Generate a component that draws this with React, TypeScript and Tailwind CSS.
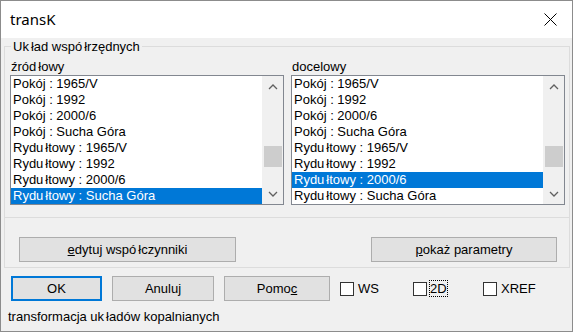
import React from "react";

const left = [
  "Pokój : 1965/V",
  "Pokój : 1992",
  "Pokój : 2000/6",
  "Pokój : Sucha Góra",
  "Rydułtowy : 1965/V",
  "Rydułtowy : 1992",
  "Rydułtowy : 2000/6",
  "Rydułtowy : Sucha Góra",
];

function T({ text }: { text: string }) {
  const parts = text.split("ł");
  return (
    <>
      {parts.map((p, i) => (
        <React.Fragment key={i}>
          {i > 0 && <span className="ml-[2px]">ł</span>}
          {p}
        </React.Fragment>
      ))}
    </>
  );
}

function Chevron({ up }: { up?: boolean }) {
  return (
    <svg width="10" height="6" viewBox="0 0 10 6">
      <path
        d={up ? "M1 5 L5 1 L9 5" : "M1 1 L5 5 L9 1"}
        fill="none"
        stroke="#606060"
        strokeWidth="1.3"
      />
    </svg>
  );
}

function ListBox({ items, selected }: { items: string[]; selected: number }) {
  return (
    <div className="flex h-[130px] w-[274px] border border-[#828790] bg-white">
      <div className="flex-1">
        {items.map((item, i) => (
          <div
            key={item}
            className={
              i === selected
                ? "h-[16px] pl-[2px] leading-[16px] bg-[#0078d7] text-white"
                : "h-[16px] pl-[2px] leading-[16px] text-black"
            }
          >
            <T text={item} />
          </div>
        ))}
      </div>
      <div className="flex w-[21px] flex-col bg-[#f0f0f0]">
        <div className="flex h-[21px] items-center justify-center">
          <Chevron up />
        </div>
        <div className="flex-1 pt-[49px]">
          <div className="ml-[2px] mr-[1px] h-[21px] bg-[#cdcdcd]" />
        </div>
        <div className="flex h-[21px] items-center justify-center">
          <Chevron />
        </div>
      </div>
    </div>
  );
}

function Button({
  children,
  width,
  focused,
}: {
  children: React.ReactNode;
  width: string;
  focused?: boolean;
}) {
  return (
    <div
      className={`${width} flex h-[25px] items-center justify-center bg-[#e1e1e1] ${
        focused ? "border-2 border-[#0078d7]" : "border border-[#adadad]"
      }`}
    >
      {children}
    </div>
  );
}

function Check({ label, width, focus }: { label: string; width: string; focus?: boolean }) {
  return (
    <div className={`${width} flex items-center`}>
      <div className="h-[14px] w-[14px] border border-[#333333] bg-white" />
      <span
        className={
          focus
            ? "ml-[3px] leading-[15px] outline outline-1 outline-dotted outline-black"
            : "ml-[4px] leading-[15px]"
        }
      >
        {label}
      </span>
    </div>
  );
}

export default function App() {
  return (
    <div className="flex h-[332px] w-[573px] flex-col border border-[#8c8c8c] bg-[#f0f0f0] font-['Liberation_Sans',Arial,sans-serif] text-[13px] text-black">
      {/* Title bar */}
      <div className="flex h-[37px] items-center justify-between bg-white pl-[9px] pr-[15px]">
        <span className="font-['Noto_Sans',sans-serif] text-[15px]">transK</span>
        <svg width="13" height="13" viewBox="0 0 13 13">
          <path d="M0.5 0.5 L12.5 12.5 M12.5 0.5 L0.5 12.5" stroke="#000" strokeWidth="1" />
        </svg>
      </div>

      {/* Coordinate system group */}
      <div className="relative ml-[3px] mt-[8px] w-[566px] border border-[#dcdcdc] pb-[12px] pl-[5px] pr-[4px] pt-[12px]">
        <span className="absolute left-[6px] top-[-8px] bg-[#f0f0f0] px-[2px] leading-[15px]">
          <T text="Układ współrzędnych" />
        </span>
        <div className="flex gap-[7px]">
          <div>
            <div className="pl-[1px] leading-[16px]">
              <T text="źródłowy" />
            </div>
            <ListBox items={left} selected={7} />
          </div>
          <div>
            <div className="pl-[1px] leading-[16px]">docelowy</div>
            <ListBox items={left} selected={6} />
          </div>
        </div>
      </div>

      {/* Buttons group */}
      <div className="ml-[3px] flex h-[50px] w-[566px] items-start justify-between border-x border-b border-[#dcdcdc] pl-[14px] pr-[12px] pt-[19px]">
        <Button width="w-[217px]">
          <span>
            <u>e</u>dytuj <T text="współczynniki" />
          </span>
        </Button>
        <Button width="w-[186px]">
          <span>
            <u>p</u>okaż parametry
          </span>
        </Button>
      </div>

      {/* Bottom row */}
      <div className="ml-[10px] mt-[8px] flex items-center gap-[10px]">
        <Button width="w-[91px]" focused>
          OK
        </Button>
        <Button width="w-[102px]">Anuluj</Button>
        <Button width="w-[106px]">
          <span>
            Pomo<u>c</u>
          </span>
        </Button>
        <div className="flex">
          <Check label="WS" width="w-[73px]" />
          <Check label="2D" width="w-[70px]" focus />
          <Check label="XREF" width="w-[80px]" />
        </div>
      </div>

      <div className="ml-[7px] mt-[8px] leading-[16px]">
        <T text="transformacja układów kopalnianych" />
      </div>
    </div>
  );
}
